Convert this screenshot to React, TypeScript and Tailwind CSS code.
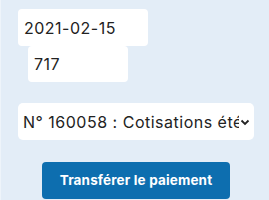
export default function App() {
  return (
    <div
      className="h-[200px] w-[269px] overflow-hidden border-l border-[#eef4fa] bg-[#e3edf7] text-[#222]"
      style={{ fontFamily: "Inter, 'Noto Sans', sans-serif" }}
    >
      <div className="flex flex-col items-start pl-[17px] pt-[9px]">
        <input
          type="text"
          readOnly
          value="2021-02-15"
          className="h-[37px] w-[130px] rounded-[4px] bg-white px-[6px] text-[16px] tracking-[0.5px] outline-none"
        />
        <input
          type="text"
          readOnly
          value="717"
          className="ml-[10px] h-[36px] w-[100px] rounded-[4px] bg-white px-[6px] text-[16px] tracking-[0.5px] outline-none"
        />
        <div className="mt-[21px] flex h-[37px] w-[236px] items-center rounded-[5px] bg-white pl-[5px] pr-[4px]">
          <span className="flex-1 overflow-hidden whitespace-nowrap text-[16px] tracking-[0.5px]">
            N° 160058 : Cotisations été 2021
          </span>
          <svg width="10" height="8" viewBox="0 0 10 8" className="ml-[1px] shrink-0">
            <path d="M1.5 2.5 L5 6 L8.5 2.5" fill="none" stroke="#222" strokeWidth="1.8" />
          </svg>
        </div>
        <button className="ml-[24px] mt-[22px] h-[37px] w-[188px] rounded-[4px] bg-[#0d6eaf] text-[13.5px] font-bold tracking-[0.15px] text-white">
          Transférer le paiement
        </button>
      </div>
    </div>
  );
}
